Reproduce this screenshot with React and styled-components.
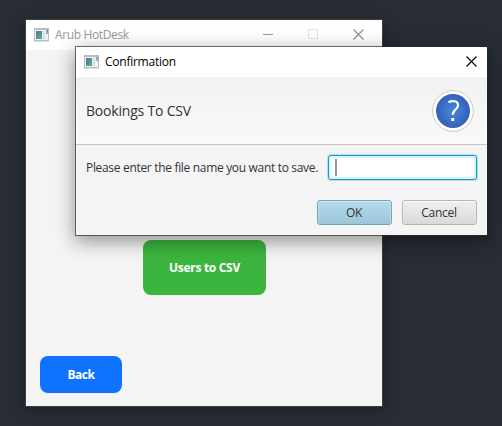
import React from 'react';
import styled, { createGlobalStyle } from 'styled-components';

const GlobalStyle = createGlobalStyle`
  *, *::before, *::after { box-sizing: border-box; }
  html, body { margin: 0; height: 100%; overflow: hidden; }
  body { font-family: "Open Sans", "Noto Sans", sans-serif; }
`;

const Desktop = styled.main`
  position: relative;
  width: 502px;
  height: 426px;
  overflow: hidden;
  background: #282c34;
`;

const Frame = styled.section`
  position: absolute;
  display: flex;
  flex-direction: column;
  background: #f4f4f4;
`;

const MainWindow = styled(Frame)`
  left: 26px;
  top: 20px;
  width: 356px;
  height: 386px;
  box-shadow: 0 0 0 1px #3c3d41, 0 3px 14px rgba(0, 0, 0, 0.35);
`;

const DialogWindow = styled(Frame)`
  left: 76px;
  top: 47px;
  width: 411px;
  height: 188px;
  box-shadow: 0 0 0 1px rgba(40, 40, 42, 0.65), 0 5px 18px 1px rgba(0, 0, 0, 0.42);
`;

const TitleBar = styled.header`
  display: flex;
  align-items: center;
  flex: none;
  height: 30px;
  padding: 0 0 0 8px;
  background: #fff;
  color: ${(p) => (p.$inactive ? '#999' : '#000')};
`;

const Label = styled.span`
  font-size: ${(p) => p.$size || 12}px;
  font-weight: ${(p) => (p.$bold ? 700 : 400)};
  letter-spacing: ${(p) => p.$track || 0}px;
  line-height: 16px;
  white-space: nowrap;
`;

const Title = styled(Label).attrs({ as: 'h1' })`
  flex: 1;
  margin: 0 0 0 6px;
`;

const Control = styled.span`
  display: flex;
  align-items: center;
  justify-content: center;
  width: ${(p) => p.$width || 46}px;
  height: 28px;
  margin-bottom: 2px;
`;

const Body = styled.div`
  display: flex;
  flex: 1;
  flex-direction: column;
  justify-content: space-between;
  padding: 190px 14px 13px;
`;

const ActionButton = styled.button`
  display: flex;
  align-items: center;
  justify-content: center;
  align-self: ${(p) => (p.$primary ? 'center' : 'flex-start')};
  width: ${(p) => (p.$primary ? 123 : 82)}px;
  height: ${(p) => (p.$primary ? 55 : 37)}px;
  margin-left: ${(p) => (p.$primary ? 1 : 0)}px;
  padding: 0;
  border: 0;
  border-radius: 8px;
  background: ${(p) => (p.$primary ? '#3cb53f' : '#1073ff')};
  color: #fff;
  font-family: inherit;
`;

const DialogHeader = styled.div`
  display: flex;
  align-items: center;
  justify-content: space-between;
  flex: none;
  height: 68px;
  padding: 0 13px 0 10px;
  border-bottom: 1px solid #c4c4c4;
  background: linear-gradient(#f2f2f2, #f9f9f9);
  color: #333;
`;

const Form = styled.div`
  display: flex;
  flex-direction: column;
  gap: 20px;
  padding: 10px 10px 0;
  color: #333;
`;

const FieldRow = styled.label`
  display: flex;
  align-items: center;
  justify-content: space-between;
  height: 25px;
`;

const TextField = styled.span`
  display: flex;
  align-items: center;
  width: 149px;
  height: 25px;
  padding-left: 6px;
  border: 1px solid #039ed3;
  border-radius: 3px;
  background: #fff;
  box-shadow: 0 0 0 1px #b3dfee, inset 0 0 0 2px #def2f9;
`;

const Caret = styled.span`
  width: 2px;
  height: 17px;
  background: #969696;
`;

const ButtonRow = styled.div`
  display: flex;
  justify-content: flex-end;
  gap: 10px;
`;

const DialogButton = styled.button`
  display: flex;
  align-items: center;
  justify-content: center;
  width: 75px;
  height: 25px;
  padding: 0 1px 0 0;
  border: 1px solid ${(p) => (p.$default ? '#7ba2b4' : '#b5b5b5')};
  border-radius: 3px;
  background: ${(p) => (p.$default
    ? 'linear-gradient(#b2dbee, #9dc5d8)'
    : 'linear-gradient(#efefef, #d9d9d9)')};
  box-shadow: inset 0 1px 0 ${(p) => (p.$default ? '#d0e9f5' : '#fcfcfc')},
    inset 1px 0 0 rgba(255, 255, 255, 0.3), inset -1px 0 0 rgba(255, 255, 255, 0.3);
  color: #333;
  font-family: inherit;
`;

function AppIcon() {
  return (
    <svg width="15" height="14" viewBox="0 0 15 14" shapeRendering="crispEdges">
      <defs>
        <linearGradient id="pane-fill" x1="0" y1="0" x2="1" y2="1">
          <stop offset="0" stopColor="#4a77a2" />
          <stop offset="1" stopColor="#5bb277" />
        </linearGradient>
      </defs>
      <path d="M0 0h15v13H0z" fill="#b8bdc3" />
      <path d="M1 2h13v10H1z" fill="#f1f2f3" />
      <path d="M2 3h6v8H2z" fill="url(#pane-fill)" />
      <path d="M9 3h2v8H9z" fill="#dcdddf" />
      <path d="M12 2h2v4h-2z" fill="#8db5c5" />
      <path d="M13 2h1v2h-1z" fill="#5d91b8" />
      <path d="M0 13h15v1H0z" fill="#dedede" />
    </svg>
  );
}

function CloseIcon({ color }) {
  return (
    <svg width="11" height="11" viewBox="0 0 11 11" fill="none" stroke={color}>
      <path d="M.5 .5l10 10M10.5 .5l-10 10" strokeWidth="1.1" />
    </svg>
  );
}

function QuestionIcon() {
  return (
    <svg width="42" height="42" viewBox="0 0 42 42">
      <defs>
        <radialGradient id="question-fill">
          <stop offset="0" stopColor="#4789dc" />
          <stop offset="1" stopColor="#355fb9" />
        </radialGradient>
      </defs>
      <circle cx="21" cy="21" r="20.4" fill="#fff" stroke="#cbcbcb" />
      <circle cx="21" cy="21" r="17" fill="url(#question-fill)" />
      <path
        d="M16.5 12.4C19.3 10.6 26 10.3 26 15.2c0 4.3-5.3 4.5-5.3 9.6"
        fill="none"
        stroke="#fff"
        strokeWidth="2.2"
      />
      <path d="M19.2 28h3v3h-3z" fill="#fff" />
    </svg>
  );
}

export default function App() {
  return (
    <Desktop>
      <GlobalStyle />
      <MainWindow>
        <TitleBar $inactive>
          <AppIcon />
          <Title $track={-0.36}>Arub HotDesk</Title>
          <Control>
            <svg width="10" height="1"><path d="M0 0h10v1H0z" fill="#999" /></svg>
          </Control>
          <Control $width={44}>
            <svg width="10" height="10" fill="none" stroke="#e3e3e3"><path d="M.5 .5h9v9h-9z" /></svg>
          </Control>
          <Control $width={47}><CloseIcon color="#8c8c8c" /></Control>
        </TitleBar>
        <Body>
          <ActionButton $primary><Label $bold $track={-0.3}>Users to CSV</Label></ActionButton>
          <ActionButton><Label $bold $track={-0.45}>Back</Label></ActionButton>
        </Body>
      </MainWindow>
      <DialogWindow role="dialog">
        <TitleBar>
          <AppIcon />
          <Title $track={-0.25}>Confirmation</Title>
          <Control $width={31}><CloseIcon color="#000" /></Control>
        </TitleBar>
        <DialogHeader>
          <Label $size={14} $track={-0.2}>Bookings To CSV</Label>
          <QuestionIcon />
        </DialogHeader>
        <Form>
          <FieldRow>
            <Label $track={-0.32}>Please enter the file name you want to save.</Label>
            <TextField><Caret /></TextField>
          </FieldRow>
          <ButtonRow>
            <DialogButton $default><Label $track={-0.25}>OK</Label></DialogButton>
            <DialogButton><Label $track={-0.25}>Cancel</Label></DialogButton>
          </ButtonRow>
        </Form>
      </DialogWindow>
    </Desktop>
  );
}
